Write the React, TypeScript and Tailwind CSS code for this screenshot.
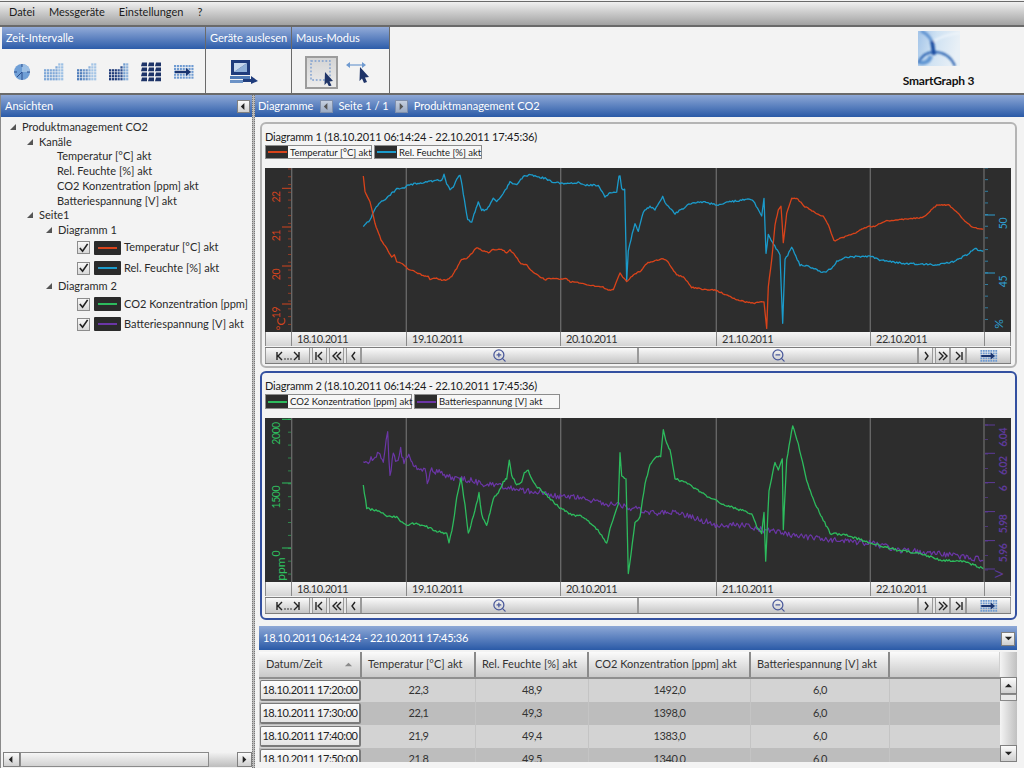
import { ZoomIn, ZoomOut } from "lucide-react";

const font = { fontFamily: 'Lato, "Open Sans", sans-serif' };

type Part = [number, number, number[]];
type Series = { color: string; width: number; amp: number; seed: number; parts: Part[] };
type Tick = { y: number; label?: string };

// points were read off the picture at 3x, ox/oy is the crop origin
function buildPath(s: Series, top: number) {
  const pts: [number, number][] = [];
  s.parts.forEach(([ox, oy, flat]) => {
    for (let i = 0; i < flat.length; i += 2) {
      pts.push([ox + flat[i] / 3 - 265, oy + flat[i + 1] / 3 - top]);
    }
  });
  let out = "";
  let n = 0;
  pts.forEach((p, i) => {
    if (i === 0) {
      out = `M${p[0].toFixed(1)} ${p[1].toFixed(1)}`;
      return;
    }
    const prev = pts[i - 1];
    const steps = Math.max(1, Math.round((p[0] - prev[0]) / 1.3));
    for (let k = 1; k <= steps; k++) {
      n++;
      const r = Math.sin(n * 12.9898 + s.seed) * 43758.5453;
      const j = (r - Math.floor(r) - 0.5) * 2 * s.amp;
      const x = prev[0] + ((p[0] - prev[0]) * k) / steps;
      const y = prev[1] + ((p[1] - prev[1]) * k) / steps + j;
      out += `L${x.toFixed(1)} ${y.toFixed(1)}`;
    }
  });
  return out;
}

const temp: Series = {
  color: "#d9431a",
  width: 1.3,
  amp: 0.6,
  seed: 1,
  parts: [
    [255, 160, [325,48, 330,95, 345,125, 360,190, 378,240, 395,265, 410,293, 418,285, 425,305, 445,312, 460,328, 480,335, 500,345, 520,350, 525,358, 545,355, 560,360, 575,360, 590,350, 605,325, 620,298, 635,295, 650,280, 665,262, 680,270, 700,278, 715,268, 740,268, 755,278, 765,270, 780,285, 798,312, 815,315, 835,338, 855,350, 872,360, 880,355, 935,357, 945,365, 975,368, 1000,375, 1040,380, 1060,390, 1075,388, 1090,350]],
    [620, 160, [0,340, 20,365, 45,340, 60,335, 80,310, 105,302, 130,295, 145,308, 170,345, 190,350, 215,382, 250,388, 285,390, 320,405, 350,420, 400,430, 432,425, 440,505, 445,380, 455,300, 465,195, 475,150, 483,138, 490,250, 500,160, 515,115, 530,115, 555,140, 580,155, 610,170, 625,195, 642,243, 660,235, 700,222, 745,198, 760,200, 800,182, 850,178, 910,172, 950,135, 985,135, 1005,150, 1035,185, 1060,203, 1090,208]],
  ],
};

const humidity: Series = {
  color: "#1b9bcb",
  width: 1.3,
  amp: 0.9,
  seed: 2,
  parts: [
    [255, 160, [325,200, 345,180, 360,145, 380,122, 395,115, 410,100, 425,88, 445,85, 460,75, 485,70, 500,70, 520,65, 560,60, 567,45, 575,70, 585,88, 595,80, 605,55, 615,47, 622,80, 628,120, 638,180, 650,185, 660,155, 670,125, 680,150, 695,150, 715,115, 725,125, 755,85, 765,65, 785,75, 805,50, 825,45, 870,55, 890,65, 915,70, 960,70, 970,65, 985,75, 1030,75, 1050,110, 1065,100, 1085,95, 1092,50]],
    [620, 160, [0,50, 5,85, 14,90, 20,360, 25,270, 45,190, 55,215, 70,155, 90,140, 105,150, 128,110, 135,130, 165,160, 190,145, 210,130, 250,125, 290,135, 330,125, 380,118, 400,122, 425,170, 432,115, 438,280, 445,225, 480,285, 488,490, 495,300, 515,262, 540,315, 570,320, 610,338, 635,325, 650,305, 675,292, 710,290, 760,290, 775,300, 850,310, 900,312, 950,315, 1000,305, 1040,285, 1065,265, 1090,275]],
  ],
};

const co2: Series = {
  color: "#2dbb5d",
  width: 1.3,
  amp: 1.1,
  seed: 3,
  parts: [
    [255, 410, [325,225, 335,295, 375,305, 400,320, 425,320, 450,345, 480,340, 515,350, 550,365, 575,370, 582,398, 595,340, 605,262, 618,205, 630,285, 640,370, 655,320, 672,250, 680,315, 695,345, 705,310, 715,265, 730,250, 745,215, 755,205, 763,152, 770,195, 785,225, 800,215, 808,185, 820,182, 840,225, 875,255, 910,290, 950,315, 985,320, 1020,350, 1040,375, 1055,402, 1065,355, 1090,280]],
    [620, 410, [0,130, 5,200, 18,210, 25,490, 45,340, 60,320, 75,220, 90,165, 110,140, 122,140, 130,60, 140,100, 150,120, 165,205, 210,225, 270,265, 330,290, 395,310, 410,350, 425,370, 432,305, 437,452, 447,240, 465,155, 475,180, 487,145, 490,360, 500,150, 518,45, 535,100, 560,215, 590,290, 630,370, 680,375, 740,395, 830,420, 900,430, 960,450, 1030,455, 1090,475]],
  ],
};

const battery: Series = {
  color: "#6b36a6",
  width: 1.2,
  amp: 3,
  seed: 4,
  parts: [
    [255, 410, [325,155, 340,155, 360,135, 375,130, 385,150, 398,70, 405,200, 415,125, 425,160, 437,120, 447,160, 465,135, 475,170, 490,180, 510,180, 517,218, 530,180, 560,190, 600,205, 640,210, 690,222, 740,230, 800,240, 860,245, 900,258, 960,262, 1020,275, 1080,285]],
    [620, 410, [0,285, 60,300, 120,312, 150,305, 210,320, 290,345, 370,345, 430,360, 510,375, 590,385, 680,395, 760,400, 830,420, 900,425, 1000,435, 1090,450]],
  ],
};

const range = (from: number, to: number, step: number) => {
  const out: number[] = [];
  for (let y = from; y <= to; y += step) out.push(y);
  return out;
};

type ChartProps = {
  top: number;
  series: Series[];
  left: Tick[];
  right: Tick[];
  leftMinor: number[];
  rightMinor: number[];
  leftColor: string;
  rightColor: string;
  leftUnit: string;
  leftUnitY: number;
  rightUnit: string;
  rightBold?: boolean;
};

function Chart(p: ChartProps) {
  return (
    <svg viewBox="0 0 746 164" className="block w-[746px] h-[164px] bg-[#2d2d2d]" style={font}>
      {[141.3, 295.7, 451.3, 605.3].map((x) => (
        <line key={x} x1={x} x2={x} y1="0" y2="164" stroke="#6a6a6a" strokeWidth="1.3" />
      ))}
      <line x1="26.7" x2="26.7" y1="0" y2="164" stroke="#6a6a6a" strokeWidth="1.3" />
      <line x1="719" x2="719" y1="0" y2="164" stroke="#6a6a6a" strokeWidth="1.3" />
      {p.leftMinor.map((y) => (
        <line key={y} x1="23" x2="26" y1={y} y2={y} stroke={p.leftColor} opacity="0.6" />
      ))}
      {p.rightMinor.map((y) => (
        <line key={y} x1="720" x2="723" y1={y} y2={y} stroke={p.rightColor} opacity="0.7" />
      ))}
      {p.left.map((t) => (
        <g key={t.y}>
          <line x1="17" x2="26" y1={t.y} y2={t.y} stroke={p.leftColor} />
          {t.label && (
            <text
              transform={`translate(15 ${t.y + 3}) rotate(-90)`}
              textAnchor="end"
              fontSize="10.5"
              letterSpacing="-0.5"
              fill={p.leftColor}
            >
              {t.label}
            </text>
          )}
        </g>
      ))}
      {p.right.map((t) => (
        <g key={t.y}>
          <line x1="720" x2="730" y1={t.y} y2={t.y} stroke={p.rightColor} />
          {t.label && (
            <text
              transform={`translate(742 ${t.y + 3}) rotate(-90)`}
              textAnchor="end"
              fontSize="10.5"
              letterSpacing="-0.5"
              fontWeight={p.rightBold ? 700 : 400}
              fill={p.rightColor}
            >
              {t.label}
            </text>
          )}
        </g>
      ))}
      <text transform={`translate(20 ${p.leftUnitY}) rotate(-90)`} textAnchor="middle" fontSize="12" fill={p.leftColor}>
        {p.leftUnit}
      </text>
      <text transform="translate(738 156) rotate(-90)" textAnchor="middle" fontSize="12" fill={p.rightColor}>
        {p.rightUnit}
      </text>
      {p.series.map((s) => (
        <path key={s.seed} d={buildPath(s, p.top)} fill="none" stroke={s.color} strokeWidth={s.width} strokeLinejoin="round" />
      ))}
    </svg>
  );
}

function Chevrons({ kind }: { kind: "first" | "prev2" | "prev" | "next" | "next2" | "last" }) {
  const d = {
    first: "M2 1v8M8 1L4 5l4 4",
    prev2: "M6 1L2 5l4 4M10 1L6 5l4 4",
    prev: "M7 1L4 5l3 4",
    next: "M5 1l3 4-3 4",
    next2: "M2 1l4 4-4 4M6 1l4 4-4 4",
    last: "M4 1l4 4-4 4M10 1v8",
  }[kind];
  return (
    <svg viewBox="0 0 12 10" className="w-[12px] h-[10px]">
      <path d={d} fill="none" stroke="#222" strokeWidth="1.4" />
    </svg>
  );
}

function GridArrow({ className }: { className: string }) {
  const cells: [number, number][] = [];
  for (let r = 0; r < 5; r++) for (let c = 0; c < 7; c++) cells.push([c, r]);
  return (
    <svg viewBox="0 0 20 14" className={className}>
      {cells.map(([c, r]) => (
        <rect key={`${c}-${r}`} x={c * 2.9} y={r * 2.9} width="2.1" height="2.1" fill="#6f9bd2" />
      ))}
      <path d="M1 7h12" stroke="#1a3570" strokeWidth="2.4" />
      <path d="M12 3l5 4-5 4z" fill="#1a3570" />
    </svg>
  );
}

function NavRow() {
  const btn = "h-full flex items-center justify-center border-x border-[#9a9a9a] bg-gradient-to-b from-[#fafafa] to-[#c6c6c6]";
  return (
    <div className="flex h-[17px] mt-[1px] border-y border-[#7c7c7c] bg-[#e6e6e6]">
      <div className={`${btn} w-[45px]`}>
        <svg viewBox="0 0 24 10" className="w-[24px] h-[10px]">
          <path d="M1 1v8M6 1L2 5l4 4M18 1l4 4-4 4M23 1v8" fill="none" stroke="#222" strokeWidth="1.4" />
          <circle cx="9" cy="8" r="0.8" fill="#222" />
          <circle cx="12" cy="8" r="0.8" fill="#222" />
          <circle cx="15" cy="8" r="0.8" fill="#222" />
        </svg>
      </div>
      <div className={`${btn} w-[15px] ml-[2px]`}>
        <Chevrons kind="first" />
      </div>
      <div className={`${btn} w-[15px] ml-[2px]`}>
        <Chevrons kind="prev2" />
      </div>
      <div className={`${btn} w-[15px] ml-[2px]`}>
        <Chevrons kind="prev" />
      </div>
      <div className={`${btn} w-[277px]`}>
        <ZoomIn size={15} color="#49589a" strokeWidth={2} />
      </div>
      <div className={`${btn} w-[280px]`}>
        <ZoomOut size={15} color="#49589a" strokeWidth={2} />
      </div>
      <div className={`${btn} w-[15px]`}>
        <Chevrons kind="next" />
      </div>
      <div className={`${btn} w-[15px] ml-[2px]`}>
        <Chevrons kind="next2" />
      </div>
      <div className={`${btn} w-[16px]`}>
        <Chevrons kind="last" />
      </div>
      <div className={`${btn} w-[45px]`}>
        <GridArrow className="w-[20px] h-[12px]" />
      </div>
    </div>
  );
}

function DateRow() {
  const cell = "h-full border-l border-[#8a8a8a] pl-[5px] leading-[14px] tracking-[-0.5px] bg-gradient-to-b from-[#f6f6f6] to-[#d4d4d4]";
  return (
    <div className="flex h-[14px] text-[11px] text-[#333]">
      <div className={`${cell} w-[26px]`} />
      <div className={`${cell} w-[115px]`}>18.10.2011</div>
      <div className={`${cell} w-[154px]`}>19.10.2011</div>
      <div className={`${cell} w-[156px]`}>20.10.2011</div>
      <div className={`${cell} w-[154px]`}>21.10.2011</div>
      <div className={`${cell} w-[114px]`}>22.10.2011</div>
      <div className={`${cell} w-[27px] border-r`} />
    </div>
  );
}

function Legend({ color, label, width }: { color: string; label: string; width: string }) {
  return (
    <div className={`flex h-full items-stretch border border-[#8c8c8c] bg-[#f7f7f7] ${width}`}>
      <div className="w-[22px] shrink-0 bg-[#2d2d2d] flex items-center justify-center">
        <div className="w-[19px] h-[2px]" style={{ background: color }} />
      </div>
      <div className="pl-[2px] text-[9.5px] leading-[13px] text-[#222] whitespace-nowrap">{label}</div>
    </div>
  );
}

function Card({
  active,
  title,
  legendHeight,
  children,
}: {
  active?: boolean;
  title: string;
  legendHeight: string;
  children: React.ReactNode;
}) {
  return (
    <div
      className={`w-[757px] rounded-[6px] border-2 pl-[3px] pr-[4px] pt-[5px] ${
        active ? "h-[249px] mt-[3px] border-[#3350a0]" : "h-[246px] mt-[5px] border-[#b4b4b4]"
      }`}
    >
      <div className="h-[15px] text-[11px] tracking-[-0.2px] leading-[15px] text-[#1c1c1c] whitespace-nowrap">{title}</div>
      <div className={`flex gap-[2px] mt-[1px] mb-[9px] ${legendHeight}`}>{children}</div>
      <CardBody active={active} />
    </div>
  );
}

function CardBody({ active }: { active?: boolean }) {
  return (
    <>
      {active ? (
        <Chart
          top={418}
          series={[battery, co2]}
          left={[{ y: 1.3, label: "2000" }, { y: 65, label: "1500" }, { y: 130, label: "0" }]}
          right={[
            { y: 7, label: "6.04" },
            { y: 35.3, label: "6.02" },
            { y: 64.6, label: "6" },
            { y: 93.6, label: "5.98" },
            { y: 122.6, label: "5.96" },
            { y: 151 },
          ]}
          leftMinor={range(1.3, 160, 12.9)}
          rightMinor={range(7, 160, 14.5)}
          leftColor="#2fc060"
          rightColor="#5d3a99"
          leftUnit="ppm"
          leftUnitY={151}
          rightUnit="V"
          rightBold
        />
      ) : (
        <Chart
          top={168}
          series={[humidity, temp]}
          left={[{ y: 20.3, label: "22" }, { y: 59, label: "21" }, { y: 98, label: "20" }, { y: 136, label: "19" }]}
          right={[{ y: 47, label: "50" }, { y: 105, label: "45" }]}
          leftMinor={range(1, 160, 7.77)}
          rightMinor={range(0, 160, 11.65)}
          leftColor="#d2441e"
          rightColor="#2f9ed0"
          leftUnit="°C"
          leftUnitY={156}
          rightUnit="%"
        />
      )}
      <DateRow />
      <NavRow />
    </>
  );
}

function Bevel({ children, className, muted }: { children: React.ReactNode; className: string; muted?: boolean }) {
  const tone = muted
    ? "border-[#7f8fac] from-[#c6d0e0] to-[#9cabc3]"
    : "border-[#808080] from-[#fbfbfb] to-[#cfcfcf]";
  return <div className={`flex items-center justify-center border bg-gradient-to-b ${tone} ${className}`}>{children}</div>;
}

function Tri({ dir, color = "#222" }: { dir: "l" | "r" | "u" | "d"; color?: string }) {
  const pts = { l: "6,1 6,9 2,5", r: "3,1 3,9 7,5", u: "1,7 9,7 5,3", d: "1,3 9,3 5,7" }[dir];
  return (
    <svg viewBox="0 0 10 10" className="w-[9px] h-[9px]">
      <polygon points={pts} fill={color} />
    </svg>
  );
}

function Caret() {
  return (
    <svg viewBox="0 0 6 6" className="w-[6px] h-[6px] shrink-0">
      <polygon points="6,0 6,6 0,6" fill="#555" />
    </svg>
  );
}

function TreeRow({ indent, caret, children }: { indent: string; caret?: boolean; children: React.ReactNode }) {
  return (
    <div className={`flex items-center h-[14.7px] ${indent}`}>
      <div className="w-[12px] shrink-0">{caret && <Caret />}</div>
      <span className="whitespace-nowrap">{children}</span>
    </div>
  );
}

function TreeCheck({ color, label, height }: { color: string; label: string; height: string }) {
  return (
    <div className={`flex items-center pl-[76px] ${height}`}>
      <div className="w-[13px] h-[13px] shrink-0 border border-[#8c8c8c] bg-gradient-to-b from-[#f8f8f8] to-[#d8d8d8] flex items-center justify-center">
        <svg viewBox="0 0 12 12" className="w-[12px] h-[12px]">
          <path d="M2 6l3 3.5L10.5 1.5" fill="none" stroke="#222" strokeWidth="1.8" />
        </svg>
      </div>
      <div className="w-[27px] h-[14px] ml-[4px] shrink-0 rounded-[1px] bg-[#2b2b2b] flex items-center justify-center">
        <div className="w-[19px] h-[2px]" style={{ background: color }} />
      </div>
      <span className="ml-[3px] whitespace-nowrap">{label}</span>
    </div>
  );
}

function StepGrid({ heights, colors }: { heights: number[]; colors: string[] }) {
  return (
    <svg viewBox="0 0 20 18" className="w-[20px] h-[18px]">
      {heights.map((h, c) =>
        Array.from({ length: h }).map((_, r) => (
          <rect key={`${c}-${r}`} x={c * 2.85} y={18 - (r + 1) * 2.95} width="2.2" height="2.3" fill={colors[c]} />
        )),
      )}
    </svg>
  );
}

function TimeIcons() {
  const steps = [4, 4, 4, 4, 5, 6, 6];
  return (
    <div className="grid grid-cols-6 pl-[4px] pr-[5px] h-[46px] items-center justify-items-center">
      <svg viewBox="0 0 18 18" className="w-[18px] h-[18px]">
        <circle cx="9" cy="9" r="8" fill="#6f9fd6" />
        <path d="M9 9V1a8 8 0 0 1 8 8z" fill="#9cbfe4" />
        <path d="M9 9L4 14M9 9v8M9 1v3M1 9h3M17 9h-3" stroke="#2d4f8e" strokeWidth="1" />
      </svg>
      <StepGrid heights={steps} colors={["#7fa8d8", "#7fa8d8", "#7fa8d8", "#7fa8d8", "#7fa8d8", "#9dc0e4", "#9dc0e4"]} />
      <StepGrid heights={steps} colors={["#4f7dbb", "#4f7dbb", "#6a94c9", "#6a94c9", "#8fb3dc", "#a5c5e6", "#a5c5e6"]} />
      <StepGrid heights={steps} colors={["#1f3a78", "#1f3a78", "#1f3a78", "#2c4d8f", "#2c4d8f", "#6f9ccf", "#8fb3dc"]} />
      <svg viewBox="0 0 20 20" className="w-[20px] h-[20px]">
        {[0, 1, 2, 3].map((r) =>
          [0, 1, 2].map((c) => (
            <path key={`${r}-${c}`} d={`M${c * 7 + 1} ${r * 5 + 0.5}h5v3.8h-6z`} fill="#1e3468" />
          )),
        )}
      </svg>
      <GridArrow className="w-[20px] h-[18px]" />
    </div>
  );
}

function GroupHead({ children }: { children: React.ReactNode }) {
  return (
    <div className="h-[22px] px-[4px] text-[11px] leading-[22px] text-white whitespace-nowrap bg-gradient-to-b from-[#93abd8] to-[#2c5ca9]">
      {children}
    </div>
  );
}

function PaneHead({ children, className }: { children: React.ReactNode; className: string }) {
  return (
    <div className={`flex items-center pt-[1px] text-[11px] text-white whitespace-nowrap bg-gradient-to-b from-[#8ea8d6] to-[#2a5aa7] ${className}`}>
      {children}
    </div>
  );
}

function Logo() {
  return (
    <svg viewBox="0 0 42 35" className="w-[42px] h-[35px]">
      <defs>
        <linearGradient id="logoBg" x1="0" y1="0" x2="1" y2="0.2">
          <stop offset="0" stopColor="#a3c4e8" />
          <stop offset="0.45" stopColor="#cfe2f3" />
          <stop offset="1" stopColor="#e9f0f6" />
        </linearGradient>
        <filter id="logoBlur" x="-20%" y="-20%" width="140%" height="140%">
          <feGaussianBlur stdDeviation="0.8" />
        </filter>
      </defs>
      <rect width="42" height="35" fill="url(#logoBg)" />
      <g fill="none" filter="url(#logoBlur)">
        <path d="M3 0C12 4 15 10 15 18" stroke="#5e92d0" strokeWidth="3" />
        <path d="M14 11C22 6 32 3 42 2" stroke="#f2f7fc" strokeWidth="1.6" />
        <path d="M0 32C4 24 10 21 16 21C26 21 33 26 37 35" stroke="#1a55aa" strokeWidth="2" />
        <path d="M14 10L16 24" stroke="#154a9f" strokeWidth="3.6" />
        <path d="M1 31C6 33 11 31 13 25" stroke="#5f94d2" strokeWidth="4" />
      </g>
    </svg>
  );
}

const rows = [
  ["18.10.2011 17:20:00", "22,3", "48,9", "1492,0", "6,0"],
  ["18.10.2011 17:30:00", "22,1", "49,3", "1398,0", "6,0"],
  ["18.10.2011 17:40:00", "21,9", "49,4", "1383,0", "6,0"],
  ["18.10.2011 17:50:00", "21,8", "49,5", "1340,0", "6,0"],
];

const tableCols = "grid grid-cols-[103px_114px_113px_162px_139px_109px]";

function DataTable() {
  const head = "h-[25px] flex items-center pl-[6px] border-r-2 border-[#8a8a8a] bg-gradient-to-b from-[#fbfbfb] to-[#c9c9c9] text-[11px] text-[#333] whitespace-nowrap";
  return (
    <div className="flex h-[110px] mt-[2px] w-[758px] overflow-hidden bg-[#d0d0d0]">
      <div className="w-[741px] shrink-0 text-[11px] text-[#333]">
        <div className={`${tableCols} border-b-2 border-[#8f8f8f]`}>
          <div className={`${head} justify-between pr-[7px]`}>
            <span className="pl-[1px]">Datum/Zeit</span>
            <Tri dir="u" color="#8a8a8a" />
          </div>
          <div className={head}>Temperatur [°C] akt</div>
          <div className={head}>Rel. Feuchte [%] akt</div>
          <div className={head}>CO2 Konzentration [ppm] akt</div>
          <div className={head}>Batteriespannung [V] akt</div>
          <div className="h-[25px] bg-gradient-to-b from-[#fbfbfb] to-[#c9c9c9]" />
        </div>
        {rows.map((r, i) => (
          <div key={r[0]} className={`${tableCols} h-[23px] tracking-[-0.4px] ${i % 2 === 0 ? "bg-[#d3d3d3]" : "bg-[#bdbdbd]"}`}>
            <div className="m-[1px] flex items-center justify-center border border-b-2 border-r-2 border-[#7a7a7a] rounded-[2px] bg-gradient-to-b from-[#fdfdfd] to-[#e4e4e4] text-[#222] whitespace-nowrap">
              {r[0]}
            </div>
            {r.slice(1).map((v) => (
              <div key={v} className="flex items-center justify-center border-r border-[#c4c4c4]">
                {v}
              </div>
            ))}
            <div />
          </div>
        ))}
      </div>
      <div className="w-[17px] shrink-0 flex flex-col pt-[25px] bg-gradient-to-r from-[#f4f4f4] to-[#c0c0c0]">
        <Bevel className="h-[17px] shrink-0">
          <Tri dir="u" />
        </Bevel>
        <div className="h-[7px] shrink-0 border border-[#888] bg-[#e8e8e8]" />
        <div className="flex-1" />
        <Bevel className="h-[17px] shrink-0">
          <Tri dir="d" />
        </Bevel>
      </div>
    </div>
  );
}

export default function App() {
  return (
    <div className="w-[1024px] h-[768px] overflow-hidden flex flex-col bg-[#f3f3f3] text-[11px] text-[#222]" style={font}>
      {/* Menu */}
      <div className="flex items-center gap-[14px] h-[26px] mt-[1px] pb-[3px] pl-[9px] border-t border-b-2 border-[#6a6a6a] bg-gradient-to-b from-[#f0f0f0] to-[#a2a2a2] text-[#1c1c1c]">
        <span>Datei</span>
        <span>Messgeräte</span>
        <span>Einstellungen</span>
        <span>?</span>
      </div>

      {/* Ribbon */}
      <div className="flex h-[68px] border-b-2 border-[#6a6a6a] pl-[2px]">
        <div className="w-[204px] border-r border-[#6a6a6a]">
          <GroupHead>Zeit-Intervalle</GroupHead>
          <TimeIcons />
        </div>
        <div className="w-[86px] border-r border-[#6a6a6a]">
          <GroupHead>Geräte auslesen</GroupHead>
          <div className="h-[46px] flex items-center justify-center pr-[10px]">
            <svg viewBox="0 0 28 24" className="w-[28px] h-[24px]">
              <rect x="1" y="0" width="19" height="15" fill="#1f3c7c" />
              <path d="M4 12L17 3V12z" fill="#8fb0d8" />
              <path d="M4 3h13L4 12z" fill="#c5d7ec" />
              <rect x="0" y="16" width="20" height="3" fill="#4d78b4" />
              <rect x="0" y="20" width="13" height="3" fill="#6b92c6" />
              <path d="M13 19h8v-3l7 5-7 3v-2h-8z" fill="#1f3c7c" />
            </svg>
          </div>
        </div>
        <div className="w-[98px] border-r border-[#6a6a6a]">
          <GroupHead>Maus-Modus</GroupHead>
          <div className="h-[46px] flex items-center pl-[13px] gap-[8px]">
            <div className="w-[33px] h-[33px] border-2 border-[#9c9c9c] bg-gradient-to-b from-[#d4d4d4] to-[#ececec] flex items-center justify-center">
              <svg viewBox="0 0 28 28" className="w-[28px] h-[28px]">
                <rect x="3" y="3" width="19" height="19" fill="none" stroke="#7d9fd0" strokeWidth="1.4" strokeDasharray="1.8 1.8" />
                <path d="M17 14l8 9-3.5 0.5 2 4-2.5 1-2-4-2.5 2.5z" fill="#1f3468" />
              </svg>
            </div>
            <svg viewBox="0 0 28 26" className="w-[28px] h-[26px]">
              <path d="M3 6h14" stroke="#6f9ad0" strokeWidth="1.2" />
              <path d="M0 6l4-3v6zM20 6l-4-3v6z" fill="#6f9ad0" />
              <path d="M14 8l9 10-4 0.5 2 4.5-3 1-2-4.500-2.500 2.500z" fill="#1f3468" />
            </svg>
          </div>
        </div>
        <div className="flex-1 flex flex-col items-center pl-[463px]">
          <div className="mt-[4px]">
            <Logo />
          </div>
          <div className="mt-[6px] text-[12px] font-bold tracking-[-0.2px] text-[#111] whitespace-nowrap">SmartGraph 3</div>
        </div>
      </div>

      {/* Main */}
      <div className="flex flex-1 min-h-0">
        <div className="w-[252px] shrink-0 flex flex-col border-l border-[#8a8a8a]">
          <PaneHead className="h-[22px] justify-between pl-[4px] pr-[2px]">
            <span>Ansichten</span>
            <Bevel className="w-[13px] h-[13px]">
              <Tri dir="l" />
            </Bevel>
          </PaneHead>
          <div className="flex-1 pt-[3px] text-[#2a2a2a]">
            <TreeRow indent="pl-[9px]" caret>Produktmanagement CO2</TreeRow>
            <TreeRow indent="pl-[26px]" caret>Kanäle</TreeRow>
            <TreeRow indent="pl-[44px]">Temperatur [°C] akt</TreeRow>
            <TreeRow indent="pl-[44px]">Rel. Feuchte [%] akt</TreeRow>
            <TreeRow indent="pl-[44px]">CO2 Konzentration [ppm] akt</TreeRow>
            <TreeRow indent="pl-[44px]">Batteriespannung [V] akt</TreeRow>
            <TreeRow indent="pl-[26px]" caret>Seite1</TreeRow>
            <TreeRow indent="pl-[45px]" caret>Diagramm 1</TreeRow>
            <TreeCheck color="#d9431a" label="Temperatur [°C] akt" height="h-[20px]" />
            <TreeCheck color="#1b9bcb" label="Rel. Feuchte [%] akt" height="h-[21px]" />
            <TreeRow indent="pl-[45px]" caret>Diagramm 2</TreeRow>
            <TreeCheck color="#2dbb5d" label="CO2 Konzentration [ppm]" height="h-[20px] mt-[1px]" />
            <TreeCheck color="#6b36a6" label="Batteriespannung [V] akt" height="h-[20px]" />
          </div>
          <div className="flex h-[15px] mb-[1px] ml-[2px] bg-gradient-to-b from-[#f4f4f4] to-[#bdbdbd]">
            <Bevel className="w-[17px]">
              <Tri dir="l" />
            </Bevel>
            <div className="w-[189px] border border-[#8a8a8a] bg-gradient-to-b from-[#f6f6f6] to-[#d2d2d2]" />
            <div className="flex-1" />
            <Bevel className="w-[15px]">
              <Tri dir="r" />
            </Bevel>
          </div>
        </div>

        <div className="w-[3px] shrink-0 border-x border-dotted border-[#777] bg-[#bbb]" />

        <div className="flex-1 min-w-0">
          <PaneHead className="h-[22px] pl-[3px]">
            <span>Diagramme</span>
            <Bevel muted className="w-[13px] h-[13px] ml-[7px]">
              <Tri dir="l" color="#555" />
            </Bevel>
            <span className="ml-[5px]">Seite 1 / 1</span>
            <Bevel muted className="w-[13px] h-[13px] ml-[6px]">
              <Tri dir="r" color="#555" />
            </Bevel>
            <span className="ml-[6px]">Produktmanagement CO2</span>
          </PaneHead>
          <div className="pl-[5px]">
            <Card title="Diagramm 1 (18.10.2011 06:14:24 - 22.10.2011 17:45:36)" legendHeight="h-[14px]">
              <Legend color="#d9431a" label="Temperatur [°C] akt" width="w-[107px]" />
              <Legend color="#1b9bcb" label="Rel. Feuchte [%] akt" width="w-[108px]" />
            </Card>
            <Card active title="Diagramm 2 (18.10.2011 06:14:24 - 22.10.2011 17:45:36)" legendHeight="h-[15px]">
              <Legend color="#2dbb5d" label="CO2 Konzentration [ppm] akt" width="w-[147px]" />
              <Legend color="#6b36a6" label="Batteriespannung [V] akt" width="w-[146px]" />
            </Card>
          </div>
          <div className="pl-[4px] mt-[6px]">
            <PaneHead className="w-[758px] h-[24px] justify-between pl-[4px] pr-[2px] tracking-[-0.25px]">
              <span>18.10.2011 06:14:24 - 22.10.2011 17:45:36</span>
              <Bevel className="w-[14px] h-[14px]">
                <Tri dir="d" />
              </Bevel>
            </PaneHead>
            <DataTable />
          </div>
        </div>
      </div>
    </div>
  );
}
